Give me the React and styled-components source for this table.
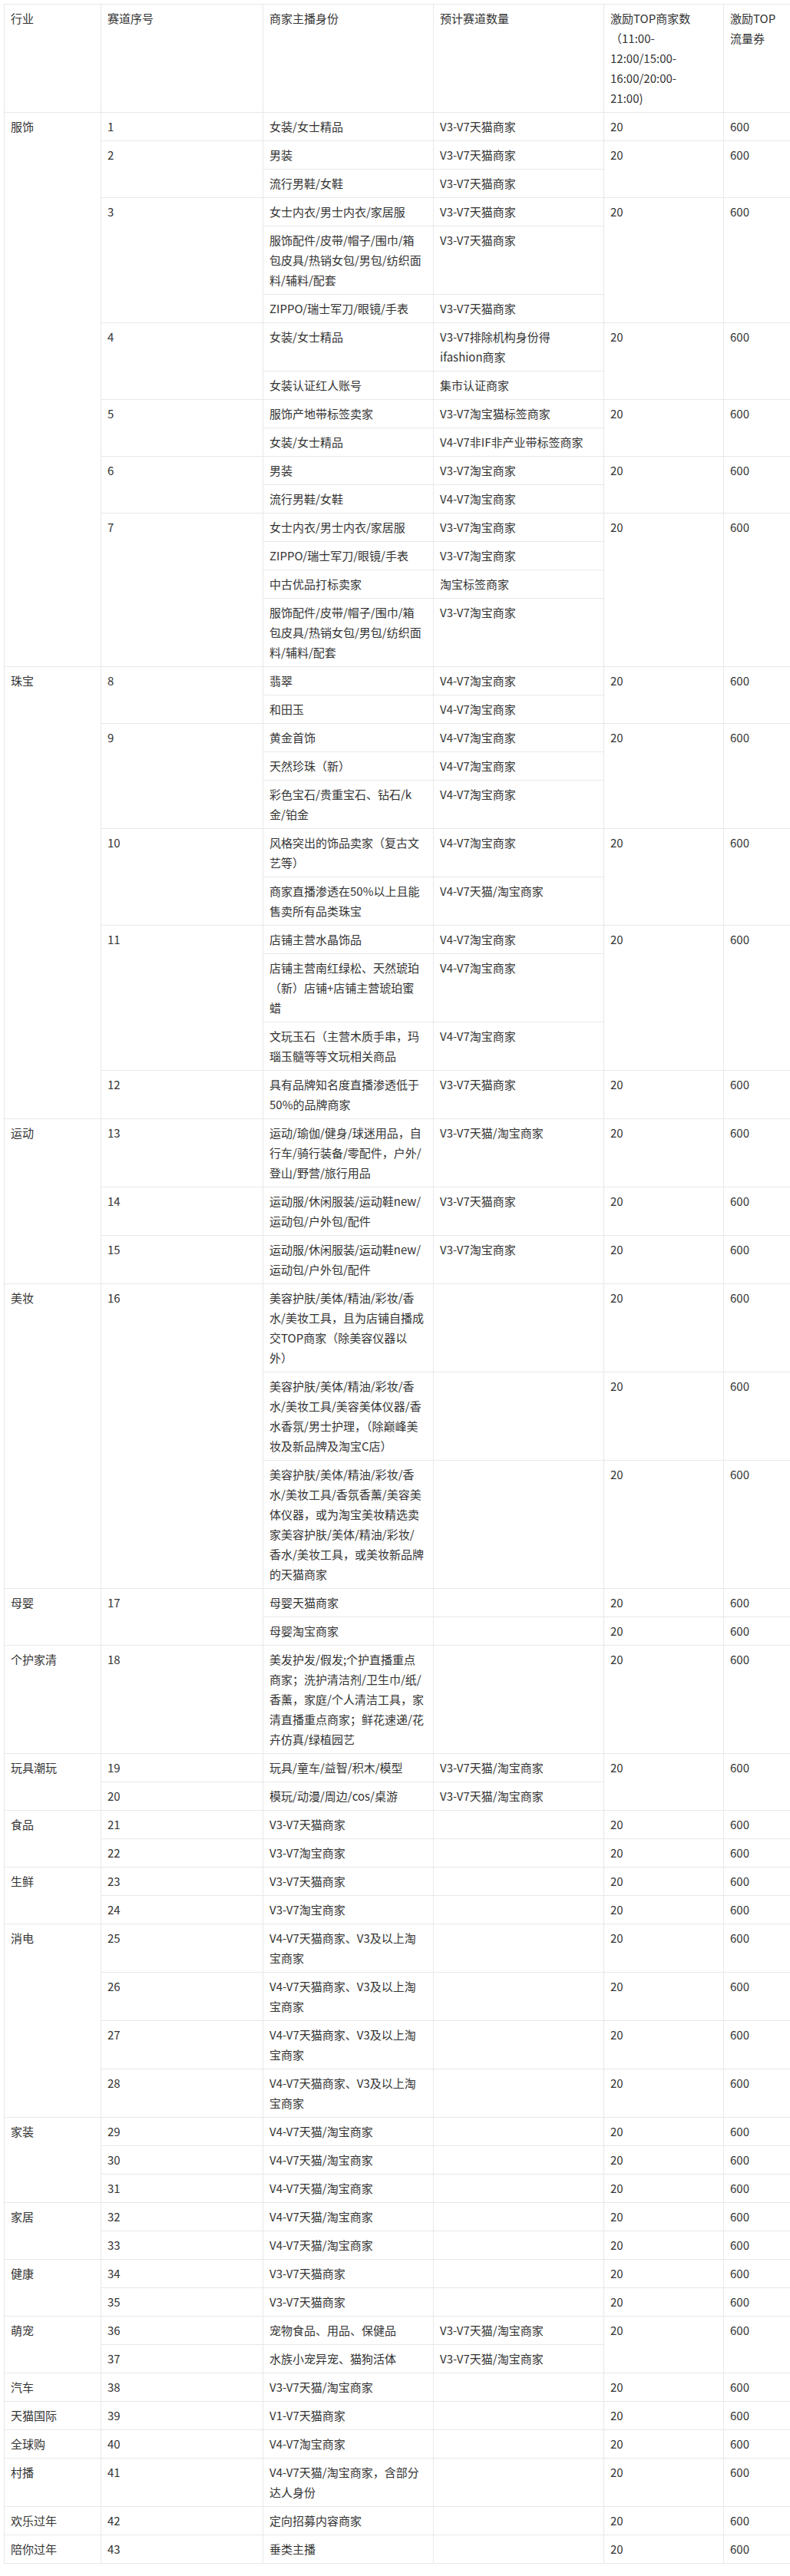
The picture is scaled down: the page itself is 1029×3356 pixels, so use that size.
import React from 'react';
import styled, { createGlobalStyle } from 'styled-components';

const GlobalStyle = createGlobalStyle`
  html, body {
    margin: 0;
    padding: 0;
    background: #ffffff;
  }
  body {
    font-family: "Noto Sans CJK SC", "Noto Sans", "Liberation Sans", sans-serif;
    color: #333333;
  }
`;

const Page = styled.div`
  padding: 5px 0 6px 5px;
  background: #ffffff;
`;

const Table = styled.table`
  border-collapse: collapse;
  table-layout: fixed;
  width: 1024px;
  font-size: 15px;
  line-height: 26px;
  color: #333333;
`;

const Col = styled.col`
  width: ${(p) => p.$w}px;
`;

const HeadCell = styled.th`
  border: 1px solid #e8e8e8;
  padding: 5px 8px;
  text-align: left;
  vertical-align: top;
  font-weight: 400;
  white-space: nowrap;
`;

const Cell = styled.td`
  border: 1px solid #e8e8e8;
  padding: 5px 8px;
  text-align: left;
  vertical-align: top;
  white-space: nowrap;
  overflow: visible;
`;

const Lines = ({ text }) => {
  const parts = text.split('\n');
  return parts.map((p, i) => (
    <React.Fragment key={i}>
      {p}
      {i < parts.length - 1 && <br />}
    </React.Fragment>
  ));
};

const widths = [126, 211, 222, 222, 156, 87];

const headers = [
  '行业',
  '赛道序号',
  '商家主播身份',
  '预计赛道数量',
  '激励TOP商家数\n（11:00-\n12:00/15:00-\n16:00/20:00-\n21:00)',
  '激励TOP\n流量券',
];

const r = (t, rs) => ({ t, rs });

const ACC = '服饰配件/皮带/帽子/围巾/箱\n包皮具/热销女包/男包/纺织面\n料/辅料/配套';
const SPORT = '运动服/休闲服装/运动鞋new/\n运动包/户外包/配件';
const ELEC = 'V4-V7天猫商家、V3及以上淘\n宝商家';
const BEAUTY = '美容护肤/美体/精油/彩妆/香';

const rows = [
  [r('服饰', 16), '1', '女装/女士精品', 'V3-V7天猫商家', '20', '600'],
  [r('2', 2), '男装', 'V3-V7天猫商家', r('20', 2), r('600', 2)],
  ['流行男鞋/女鞋', 'V3-V7天猫商家'],
  [r('3', 3), '女士内衣/男士内衣/家居服', 'V3-V7天猫商家', r('20', 3), r('600', 3)],
  [ACC, 'V3-V7天猫商家'],
  ['ZIPPO/瑞士军刀/眼镜/手表', 'V3-V7天猫商家'],
  [r('4', 2), '女装/女士精品', 'V3-V7排除机构身份得\nifashion商家', r('20', 2), r('600', 2)],
  ['女装认证红人账号', '集市认证商家'],
  [r('5', 2), '服饰产地带标签卖家', 'V3-V7淘宝猫标签商家', r('20', 2), r('600', 2)],
  ['女装/女士精品', 'V4-V7非IF非产业带标签商家'],
  [r('6', 2), '男装', 'V3-V7淘宝商家', r('20', 2), r('600', 2)],
  ['流行男鞋/女鞋', 'V4-V7淘宝商家'],
  [r('7', 4), '女士内衣/男士内衣/家居服', 'V3-V7淘宝商家', r('20', 4), r('600', 4)],
  ['ZIPPO/瑞士军刀/眼镜/手表', 'V3-V7淘宝商家'],
  ['中古优品打标卖家', '淘宝标签商家'],
  [ACC, 'V3-V7淘宝商家'],

  [r('珠宝', 11), r('8', 2), '翡翠', 'V4-V7淘宝商家', r('20', 2), r('600', 2)],
  ['和田玉', 'V4-V7淘宝商家'],
  [r('9', 3), '黄金首饰', 'V4-V7淘宝商家', r('20', 3), r('600', 3)],
  ['天然珍珠（新）', 'V4-V7淘宝商家'],
  ['彩色宝石/贵重宝石、钻石/k\n金/铂金', 'V4-V7淘宝商家'],
  [r('10', 2), '风格突出的饰品卖家（复古文\n艺等）', 'V4-V7淘宝商家', r('20', 2), r('600', 2)],
  ['商家直播渗透在50%以上且能\n售卖所有品类珠宝', 'V4-V7天猫/淘宝商家'],
  [r('11', 3), '店铺主营水晶饰品', 'V4-V7淘宝商家', r('20', 3), r('600', 3)],
  ['店铺主营南红绿松、天然琥珀\n（新）店铺+店铺主营琥珀蜜\n蜡', 'V4-V7淘宝商家'],
  ['文玩玉石（主营木质手串，玛\n瑙玉髓等等文玩相关商品', 'V4-V7淘宝商家'],
  ['12', '具有品牌知名度直播渗透低于\n50%的品牌商家', 'V3-V7天猫商家', '20', '600'],

  [r('运动', 3), '13', '运动/瑜伽/健身/球迷用品，自\n行车/骑行装备/零配件，户外/\n登山/野营/旅行用品', 'V3-V7天猫/淘宝商家', '20', '600'],
  ['14', SPORT, 'V3-V7天猫商家', '20', '600'],
  ['15', SPORT, 'V3-V7淘宝商家', '20', '600'],

  [r('美妆', 3), r('16', 3), BEAUTY + '\n水/美妆工具，且为店铺自播成\n交TOP商家（除美容仪器以\n外）', '', '20', '600'],
  [BEAUTY + '\n水/美妆工具/美容美体仪器/香\n水香氛/男士护理，（除巅峰美\n妆及新品牌及淘宝C店）', '', '20', '600'],
  [BEAUTY + '\n水/美妆工具/香氛香薰/美容美\n体仪器，或为淘宝美妆精选卖\n家美容护肤/美体/精油/彩妆/\n香水/美妆工具，或美妆新品牌\n的天猫商家', '', '20', '600'],

  [r('母婴', 2), r('17', 2), '母婴天猫商家', '', '20', '600'],
  ['母婴淘宝商家', '', '20', '600'],

  ['个护家清', '18', '美发护发/假发;个护直播重点\n商家；洗护清洁剂/卫生巾/纸/\n香薰，家庭/个人清洁工具，家\n清直播重点商家；鲜花速递/花\n卉仿真/绿植园艺', '', '20', '600'],

  [r('玩具潮玩', 2), '19', '玩具/童车/益智/积木/模型', 'V3-V7天猫/淘宝商家', r('20', 2), r('600', 2)],
  ['20', '模玩/动漫/周边/cos/桌游', 'V3-V7天猫/淘宝商家'],

  [r('食品', 2), '21', 'V3-V7天猫商家', '', '20', '600'],
  ['22', 'V3-V7淘宝商家', '', '20', '600'],

  [r('生鲜', 2), '23', 'V3-V7天猫商家', '', '20', '600'],
  ['24', 'V3-V7淘宝商家', '', '20', '600'],

  [r('消电', 4), '25', ELEC, '', '20', '600'],
  ['26', ELEC, '', '20', '600'],
  ['27', ELEC, '', '20', '600'],
  ['28', ELEC, '', '20', '600'],

  [r('家装', 3), '29', 'V4-V7天猫/淘宝商家', '', '20', '600'],
  ['30', 'V4-V7天猫/淘宝商家', '', '20', '600'],
  ['31', 'V4-V7天猫/淘宝商家', '', '20', '600'],

  [r('家居', 2), '32', 'V4-V7天猫/淘宝商家', '', '20', '600'],
  ['33', 'V4-V7天猫/淘宝商家', '', '20', '600'],

  [r('健康', 2), '34', 'V3-V7天猫商家', '', '20', '600'],
  ['35', 'V3-V7天猫商家', '', '20', '600'],

  [r('萌宠', 2), '36', '宠物食品、用品、保健品', 'V3-V7天猫/淘宝商家', r('20', 2), r('600', 2)],
  ['37', '水族小宠异宠、猫狗活体', 'V3-V7天猫/淘宝商家'],

  ['汽车', '38', 'V3-V7天猫/淘宝商家', '', '20', '600'],
  ['天猫国际', '39', 'V1-V7天猫商家', '', '20', '600'],
  ['全球购', '40', 'V4-V7淘宝商家', '', '20', '600'],
  ['村播', '41', 'V4-V7天猫/淘宝商家，含部分\n达人身份', '', '20', '600'],
  ['欢乐过年', '42', '定向招募内容商家', '', '20', '600'],
  ['陪你过年', '43', '垂类主播', '', '20', '600'],
];

export default function App() {
  return (
    <>
      <GlobalStyle />
      <Page>
        <Table>
          <colgroup>
            {widths.map((w, i) => (
              <Col key={i} $w={w} />
            ))}
          </colgroup>
          <thead>
            <tr>
              {headers.map((h, i) => (
                <HeadCell key={i}>
                  <Lines text={h} />
                </HeadCell>
              ))}
            </tr>
          </thead>
          <tbody>
            {rows.map((row, ri) => (
              <tr key={ri}>
                {row.map((c, ci) => {
                  const cell = typeof c === 'string' ? { t: c, rs: 1 } : c;
                  return (
                    <Cell key={ci} rowSpan={cell.rs}>
                      <Lines text={cell.t} />
                    </Cell>
                  );
                })}
              </tr>
            ))}
          </tbody>
        </Table>
      </Page>
    </>
  );
}
